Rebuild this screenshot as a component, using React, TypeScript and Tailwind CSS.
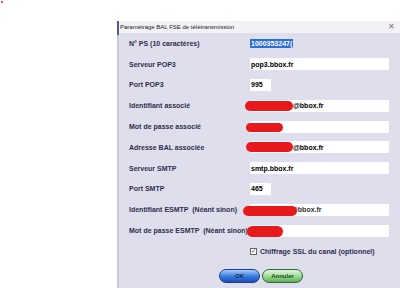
import React from "react";

const Blob = ({ l, w, t = -5, h = 10 }: { l: number; w: number; t?: number; h?: number }) => (
  <div
    className="absolute rounded-full bg-[#e8191c]"
    style={{ left: l, width: w, top: `calc(50% + ${t}px)`, height: h }}
  />
);

function Row({ label, children }: { label: string; children?: React.ReactNode }) {
  return (
    <div className="flex h-[20.8px] items-center">
      <div className="w-[121px] shrink-0 whitespace-pre font-bold text-[#2e2e4c] text-[7px] leading-none">{label}</div>
      <div className="relative flex h-full flex-1 items-center">{children}</div>
    </div>
  );
}

const Box = ({ w = 139, children }: { w?: number; children?: React.ReactNode }) => (
  <div
    className="flex h-[12px] items-center bg-white pl-[1px] text-[7px] font-bold leading-none text-black"
    style={{ width: w }}
  >
    {children}
  </div>
);

export default function App() {
  return (
    <div
      className="relative h-[288px] w-[400px] overflow-hidden bg-white"
      style={{ fontFamily: '"Liberation Sans", Arial, sans-serif' }}
    >
      <div className="absolute left-[1px] top-[1px] h-[2px] w-[2px] rounded-full bg-[#e02020]" />
      <div className="ml-[117px] mt-[21px] flex h-[267px] w-[283px] flex-col border-l-2 border-[#c9c9d3] relative">
        <div className="absolute -left-[2px] top-0 h-[14px] w-[2px] bg-[#51607a]" />
        <div className="flex h-[12px] items-center justify-between bg-[#f1f1f6] pl-[1px] pr-[5px]">
          <span className="text-[6px] leading-none text-[#222]">Paramétrage BAL FSE de télétransmission</span>
          <span className="text-[8px] leading-none text-[#777]">✕</span>
        </div>
        <div className="flex flex-1 flex-col bg-[#dedeed] pl-[10px]">
          <Row label="N° PS (10 caractères)">
            <span className="bg-[#2f6fd6] px-[1px] text-[7px] font-bold leading-[9px] text-white">1000353247(</span>
          </Row>
          <Row label="Serveur POP3">
            <Box>pop3.bbox.fr</Box>
          </Row>
          <Row label="Port POP3">
            <Box w={21}>995</Box>
          </Row>
          <Row label="Identifiant associé">
            <Box>
              <span className="pl-[42px]">@bbox.fr</span>
            </Box>
            <Blob l={-5} w={48} />
          </Row>
          <Row label="Mot de passe associé">
            <Box />
            <Blob l={-4} w={37} t={-4} h={9} />
          </Row>
          <Row label="Adresse BAL associée">
            <Box>
              <span className="pl-[42px]">@bbox.fr</span>
            </Box>
            <Blob l={-4} w={47} />
          </Row>
          <Row label="Serveur SMTP">
            <Box>smtp.bbox.fr</Box>
          </Row>
          <Row label="Port SMTP">
            <Box w={21}>465</Box>
          </Row>
          <Row label="Identifiant ESMTP  (Néant sinon)">
            <Box>
              <span className="pl-[40px] text-[#333]">@bbox.fr</span>
            </Box>
            <Blob l={-7} w={54} t={-4} />
          </Row>
          <Row label="Mot de passe ESMTP  (Néant sinon)">
            <Box />
            <Blob l={-3} w={36} t={-5} h={11} />
          </Row>
          <Row label="">
            <div className="flex items-center gap-[3px]">
              <div className="flex h-[7px] w-[7px] items-center justify-center border border-[#666] bg-white text-[6px] leading-none text-[#222]">
                ✓
              </div>
              <span className="text-[7px] font-bold leading-none text-[#2e2e4c]">Chiffrage SSL du canal (optionnel)</span>
            </div>
          </Row>
          <div className="mt-[7px] flex gap-[2px] pl-[90px]">
            <div className="flex h-[14px] w-[41px] items-center justify-center rounded-full border border-[#1d3c8a] bg-gradient-to-b from-[#a9cdf7] via-[#3b7fe0] to-[#1a4fb8] text-[6px] font-bold leading-none text-[#1b2a55]">
              OK
            </div>
            <div className="flex h-[14px] w-[41px] items-center justify-center rounded-full border border-[#2c6a2e] bg-gradient-to-b from-[#e3f7df] via-[#9fdc98] to-[#5fae58] text-[6px] font-bold leading-none text-[#1d4a1f]">
              Annuler
            </div>
          </div>
        </div>
      </div>
    </div>
  );
}
